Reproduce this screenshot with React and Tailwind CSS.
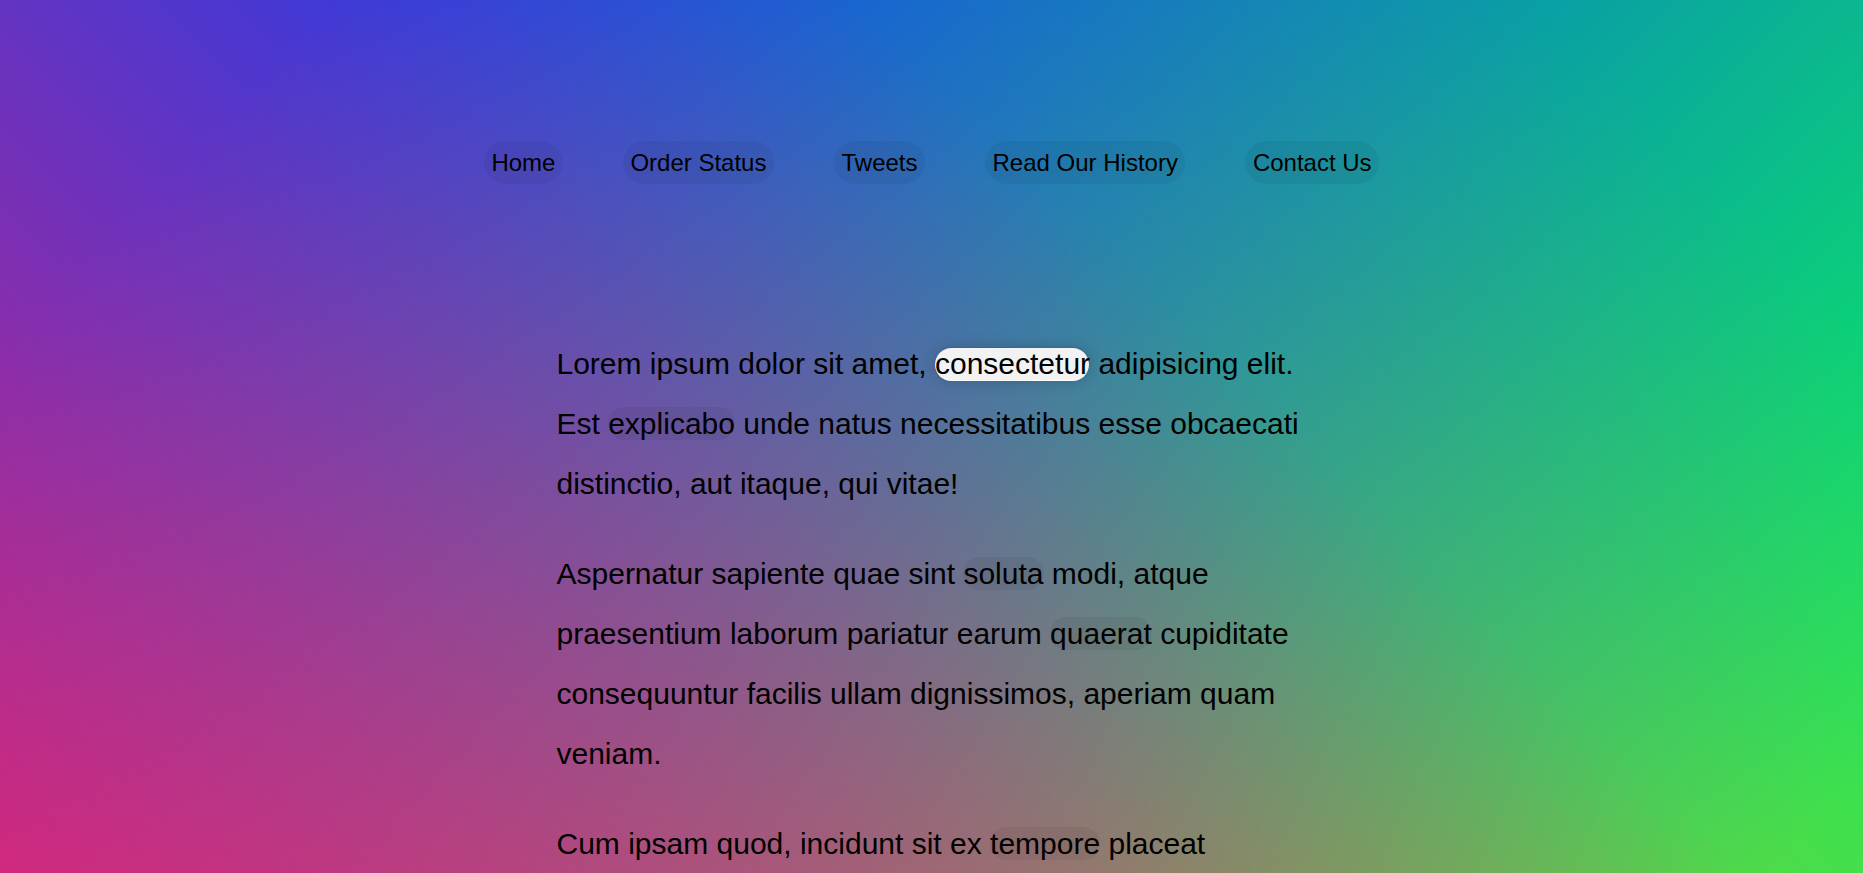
import React from "react";

const menu = ["Home", "Order Status", "Tweets", "Read Our History", "Contact Us"];

function L({ children }) {
  return (
    <a href="#" className="text-black no-underline bg-black/5 rounded-[30px]">
      {children}
    </a>
  );
}

export default function App() {
  return (
    <div className="flow-root isolate relative min-h-screen text-black font-['Liberation_Sans',Arial,sans-serif] bg-[linear-gradient(45deg,hsla(340,100%,55%,1)_0%,hsla(340,100%,55%,0)_70%),linear-gradient(135deg,hsla(225,95%,50%,1)_10%,hsla(225,95%,50%,0)_80%),linear-gradient(225deg,hsla(140,90%,50%,1)_10%,hsla(140,90%,50%,0)_80%),linear-gradient(315deg,hsla(35,95%,55%,1)_100%,hsla(35,95%,55%,0)_70%)]">
      <nav>
        <ul className="flex justify-center list-none p-0 mt-[141px] mb-[150px] text-[24px] leading-[normal]">
          {menu.map((m) => (
            <li key={m}>
              <a href="#" className="inline-block p-[7.5px] mx-[30px] text-black no-underline bg-black/5 rounded-[30px]">
                {m}
              </a>
            </li>
          ))}
        </ul>
      </nav>
      <div className="relative mx-auto max-w-[750px] text-[30px] leading-[60px]">
        <span className="absolute left-[378.5px] top-[13.5px] w-[154px] h-[33px] bg-white rounded-[30px] -z-10 shadow-[0_0_15px_rgba(0,0,0,0.2)]"></span>
        <p className="my-[30px]">
          Lorem ipsum dolor sit amet, <L>consectetur</L> adipisicing elit. Est <L>explicabo</L> unde natus necessitatibus esse obcaecati distinctio, aut itaque, qui vitae!
        </p>
        <p className="my-[30px]">
          Aspernatur sapiente quae sint <L>soluta</L> modi, atque praesentium laborum pariatur earum <L>quaerat</L> cupiditate consequuntur facilis ullam dignissimos, aperiam quam veniam.
        </p>
        <p className="my-[30px]">
          Cum ipsam quod, incidunt sit ex <L>tempore</L> placeat maxime <L>corrupti</L> possimus <L>veritatis</L> ipsum fugit recusandae est doloremque? Hic, <L>quibusdam</L>, nulla.
        </p>
        <p className="my-[30px]">
          Esse quibusdam, ad, ducimus cupiditate <L>nulla</L>, quae magni odit <L>totam</L> ut consequatur eveniet sunt quam provident sapiente dicta neque quod.
        </p>
        <p className="my-[30px]">
          Aliquam <L>dicta</L> sequi culpa fugiat <L>consequuntur</L> pariatur optio ad minima, maxime <L>odio</L>, distinctio magni impedit tempore enim repellendus <L>repudiandae</L> quas!
        </p>
      </div>
    </div>
  );
}
